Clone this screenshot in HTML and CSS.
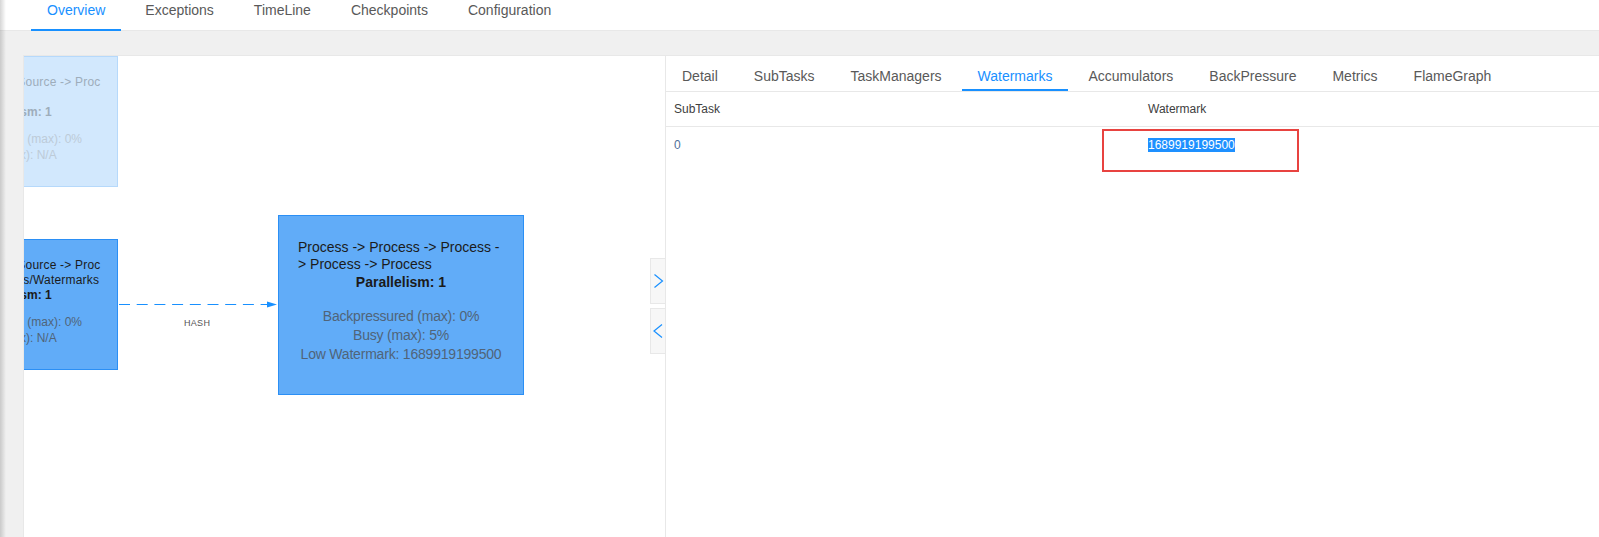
FILE: index.html
```html
<!DOCTYPE html>
<html lang="en">
<head>
    <meta charset="UTF-8">
    <title>Job Overview</title>
    <link rel="stylesheet" href="styles.css">
</head>
<body>
    <div class="top-tabs">
        <div class="ttab active">Overview</div>
        <div class="ttab">Exceptions</div>
        <div class="ttab">TimeLine</div>
        <div class="ttab">Checkpoints</div>
        <div class="ttab">Configuration</div>
    </div>

    <div class="card">
        <div class="graph">
            <div class="node faded node-top">
                <div class="title">Source: Custom Source -&gt; Proc<br>&nbsp;</div>
                <div class="para">Parallelism: 1</div>
                <div class="stats">Backpressured (max): 0%<br>Busy (max): N/A</div>
            </div>
            <div class="node node-src">
                <div class="title">Source: Custom Source -&gt; Proc<br>ess -&gt; Timestamps/Watermarks</div>
                <div class="para">Parallelism: 1</div>
                <div class="stats">Backpressured (max): 0%<br>Busy (max): N/A</div>
            </div>

            <svg class="edge" width="160" height="9" viewBox="0 0 160 9">
                <line x1="0" y1="4.5" x2="150" y2="4.5" stroke="#1890ff" stroke-width="1" stroke-dasharray="11 6.7"/>
                <polygon points="148,1.5 158,4.5 148,7.5" fill="#1890ff"/>
            </svg>
            <div class="edge-label">HASH</div>

            <div class="node big node-proc">
                <div class="title">Process -&gt; Process -&gt; Process -<br>&gt; Process -&gt; Process</div>
                <div class="para">Parallelism: 1</div>
                <div class="stats">Backpressured (max): 0%<br>Busy (max): 5%<br>Low Watermark: 1689919199500</div>
            </div>

            <div class="toggle toggle-open">
                <svg width="15" height="46" viewBox="0 0 15 46"><polyline points="4.5,16.5 12.5,23 4.5,29.5" fill="none" stroke="#1890ff" stroke-width="1.2"/></svg>
            </div>
            <div class="toggle toggle-close">
                <svg width="15" height="46" viewBox="0 0 15 46"><polyline points="12,16.5 4,23 12,29.5" fill="none" stroke="#1890ff" stroke-width="1.2"/></svg>
            </div>
        </div>

        <div class="panel">
            <div class="dtabs">
                <div class="dtab">Detail</div>
                <div class="dtab">SubTasks</div>
                <div class="dtab">TaskManagers</div>
                <div class="dtab active">Watermarks</div>
                <div class="dtab">Accumulators</div>
                <div class="dtab">BackPressure</div>
                <div class="dtab">Metrics</div>
                <div class="dtab">FlameGraph</div>
            </div>
            <div class="table">
                <div class="row head">
                    <div class="cell">SubTask</div>
                    <div class="cell">Watermark</div>
                </div>
                <div class="row">
                    <div class="cell subtask">0</div>
                    <div class="cell"><span class="selected">1689919199500</span></div>
                </div>
            </div>
        </div>
    </div>

    <div class="mark"></div>
</body>
</html>
```

FILE: styles.css
```css
body {
    margin: 0;
    height: 537px;
    overflow: hidden;
    position: relative;
    font-family: "Liberation Sans", Arial, sans-serif;
    background-color: #f0f0f0;
}
body::before {
    content: "";
    position: absolute;
    left: 0;
    top: 0;
    bottom: 0;
    width: 6px;
    background: linear-gradient(to right, rgba(0, 0, 0, 0.16), rgba(0, 0, 0, 0));
    z-index: 5;
}

/* top tabs */
.top-tabs {
    height: 30px;
    display: flex;
    padding-left: 31px;
    background-color: #fff;
    border-bottom: 1px solid #e8e8e8;
}
.ttab {
    height: 31px;
    box-sizing: border-box;
    margin-right: 8px;
    margin-bottom: -1px;
    padding: 0 16px;
    font-size: 14px;
    line-height: 20px;
    color: #595959;
    border-bottom: 2px solid transparent;
}
.ttab.active {
    color: #1890ff;
    border-bottom-color: #1890ff;
}

.card {
    margin: 24px 0 0 23px;
    height: 482px;
    box-sizing: border-box;
    display: flex;
    background-color: #fff;
    border-top: 1px solid #e8e8e8;
    border-left: 1px solid #e8e8e8;
}

/* job graph */
.graph {
    position: relative;
    width: 641px;
    flex-shrink: 0;
    overflow: hidden;
    border-right: 1px solid #e8e8e8;
}
.node {
    position: absolute;
    box-sizing: border-box;
    width: 210px;
    height: 131px;
    left: -116px;
    padding: 18px 16px 0;
    font-size: 12px;
    color: #1b1b1b;
    background-color: #61acf8;
    border: 1px solid #2b8ff5;
}
.node .title {
    line-height: 15px;
    white-space: nowrap;
    letter-spacing: 0.2px;
}
.node .para {
    text-align: center;
    font-weight: bold;
    line-height: 15px;
}
.node .stats {
    margin-top: 11px;
    text-align: center;
    line-height: 16px;
    white-space: nowrap;
    color: #506479;
}
.node-top {
    top: 0;
}
.node-src {
    top: 183px;
}
.node.faded {
    background-color: #d2e8fd;
    border-color: #b6d9fb;
    color: #9eadbb;
}
.node.faded .stats {
    color: #bdcbd8;
}
.node.big {
    left: 254px;
    top: 159px;
    width: 246px;
    height: 180px;
    padding: 23px 19px 0;
    font-size: 14px;
}
.node.big .title {
    line-height: 17px;
    letter-spacing: 0;
}
.node.big .para {
    line-height: 19px;
}
.node.big .stats {
    margin: 15px -6px 0;
    line-height: 19px;
    letter-spacing: -0.2px;
}

.edge {
    position: absolute;
    left: 95px;
    top: 244px;
}
.edge-label {
    position: absolute;
    left: 160px;
    top: 262px;
    font-size: 9px;
    color: #555;
    letter-spacing: 0.3px;
}

.toggle {
    position: absolute;
    left: 626px;
    width: 15px;
    height: 46px;
    box-sizing: border-box;
    background-color: #f7f7f7;
    border: 1px solid #e8e8e8;
    border-right: none;
}
.toggle svg {
    display: block;
    margin-left: -1px;
    margin-top: -1px;
}
.toggle-open {
    top: 202px;
}
.toggle-close {
    top: 252px;
}

/* detail panel */
.panel {
    flex: 1;
}
.dtabs {
    display: flex;
    height: 35px;
    border-bottom: 1px solid #e8e8e8;
}
.dtab {
    height: 35px;
    box-sizing: border-box;
    padding: 7px 16px 0;
    margin-right: 4px;
    font-size: 14px;
    line-height: 26px;
    color: #595959;
    border-bottom: 2px solid transparent;
}
.dtab.active {
    color: #1890ff;
    border-bottom-color: #1890ff;
}

.table {
    font-size: 12px;
}
.row {
    display: grid;
    grid-template-columns: 474px 1fr;
}
.row.head {
    height: 35px;
    box-sizing: border-box;
    border-bottom: 1px solid #e8e8e8;
    color: #404040;
    line-height: 34px;
}
.cell {
    padding: 0 8px;
}
.row:not(.head) .cell {
    padding-top: 10px;
    line-height: 17px;
}
.subtask {
    color: #50709a;
}
.selected {
    background-color: #1e90ff;
    color: #fff;
}

.mark {
    position: absolute;
    left: 1102px;
    top: 129px;
    width: 197px;
    height: 43px;
    box-sizing: border-box;
    border: 2px solid #e84340;
}
```
